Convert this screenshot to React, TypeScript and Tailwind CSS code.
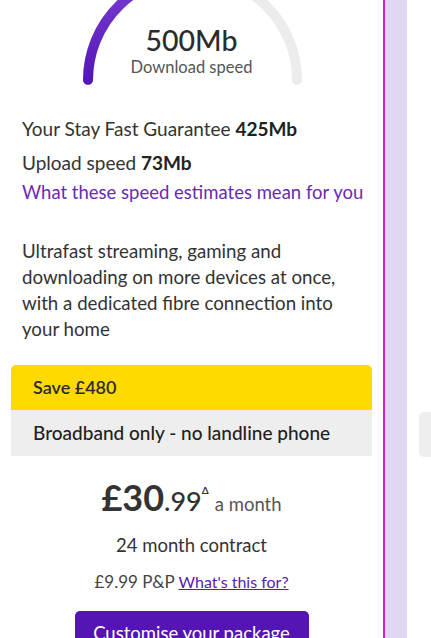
import React from "react";

function Gauge() {
  const cx = 192.5;
  const cy = 80;
  const r = 104.5;
  const pt = (deg: number) => {
    const a = (deg * Math.PI) / 180;
    return [cx + r * Math.cos(a), cy - r * Math.sin(a)];
  };
  const [x0, y0] = pt(180);
  const [x1, y1] = pt(88);
  const [x2, y2] = pt(0);
  return (
    <svg width="384" height="95" className="absolute left-0 top-0" viewBox="0 0 384 95">
      <defs>
        <linearGradient id="pg" x1="0" y1="1" x2="0" y2="0">
          <stop offset="0" stopColor="#5417b8" />
          <stop offset="1" stopColor="#7d3ed2" />
        </linearGradient>
      </defs>
      <path
        d={`M ${x0} ${y0} A ${r} ${r} 0 0 1 ${x2} ${y2}`}
        fill="none"
        stroke="#ececec"
        strokeWidth="10"
        strokeLinecap="round"
      />
      <path
        d={`M ${x0} ${y0} A ${r} ${r} 0 0 1 ${x1} ${y1}`}
        fill="none"
        stroke="url(#pg)"
        strokeWidth="10"
        strokeLinecap="round"
      />
    </svg>
  );
}

export default function App() {
  return (
    <div
      className="flex w-[431px] h-[638px] overflow-hidden bg-white text-[#333]"
      style={{ fontFamily: "Lato, 'Noto Sans', sans-serif" }}
    >
      <div className="w-[383px] shrink-0 bg-white px-[11px]">
        <div className="relative h-[95px] -mx-[11px]">
          <Gauge />
          <div className="relative pt-[23px] text-center">
            <div className="text-[28.5px] leading-[34px] font-medium text-[#2b2b2b]">500Mb</div>
            <div className="text-[16.5px] leading-[20px] text-[#555]">Download speed</div>
          </div>
        </div>
        <div className="px-[11px]">
          <p className="mt-[22px] text-[19px] leading-[24px]">
            Your Stay Fast Guarantee <span className="font-bold text-[#222]">425Mb</span>
          </p>
          <p className="mt-[10px] text-[19px] leading-[24px]">
            Upload speed <span className="font-bold text-[#222]">73Mb</span>
          </p>
          <p className="mt-[5px] whitespace-nowrap text-[18.5px] leading-[24px] text-[#6a2bb0]">
            What these speed estimates mean for you
          </p>
          <p className="mt-[34px] text-[18.7px] leading-[26px]">
            Ultrafast streaming, gaming and downloading on more devices at once, with a dedicated fibre
            connection into your home
          </p>
        </div>
        <div className="mt-[23px] rounded-t-[5px] bg-[#ffda00] h-[45px] px-[22px] pt-[11px] text-[18px] leading-[22px] font-semibold text-[#2b2b2b]">
          Save £480
        </div>
        <div className="bg-[#eeeeee] h-[46px] px-[22px] pt-[11px] text-[19px] leading-[24px] font-medium text-[#222]">
          Broadband only - no landline phone
        </div>
        <div className="mt-[21px] flex items-baseline justify-center">
          <span className="text-[36px] leading-[40px] font-bold text-[#333]">£30</span>
          <span className="text-[27px] font-medium text-[#333]">.99</span>
          <span className="self-start mt-[6px] text-[10px] font-bold text-[#333]">Δ</span>
          <span className="ml-[6px] text-[18.5px] text-[#555]">a month</span>
        </div>
        <div className="mt-[10px] text-center text-[18.5px] leading-[26px]">24 month contract</div>
        <div className="mt-[12px] text-center text-[17px] leading-[24px] text-[#444]">
          £9.99 P&amp;P{" "}
          <span className="text-[16px] text-[#5a1ab4] underline">What's this for?</span>
        </div>
        <div className="mt-[17px] flex justify-center">
          <div className="w-[234px] h-[44px] rounded-[5px] bg-[#5514b4] text-white text-[18.5px] leading-[24px] text-center pt-[10px]">
            Customise your package
          </div>
        </div>
      </div>
      <div className="w-[2px] shrink-0 bg-[#d21fdc]" />
      <div className="w-[22px] shrink-0 bg-[#e2d7f2]" />
      <div className="flex-1 bg-white pl-[12px] pt-[412px]">
        <div className="h-[45px] rounded-l-[5px] bg-[#eeeeee]" />
      </div>
    </div>
  );
}
